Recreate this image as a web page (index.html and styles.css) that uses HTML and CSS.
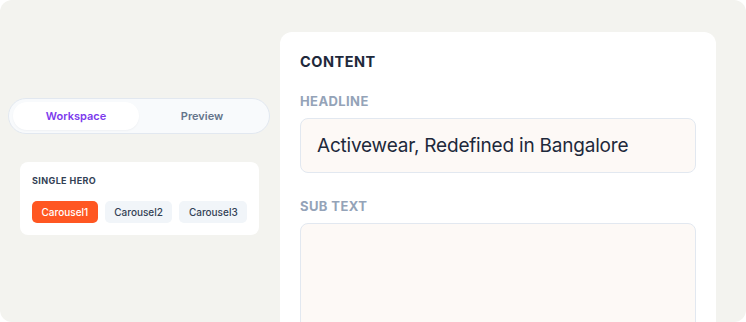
FILE: index.html
```html
<!DOCTYPE html>
<html>
<head>
<meta charset="utf-8">
<link rel="stylesheet" href="styles.css">
</head>
<body>
<div class="frame">
  <div class="side">
    <div class="toggle">
      <div class="tab active">Workspace</div>
      <div class="tab">Preview</div>
    </div>
    <div class="card">
      <div class="card-title">SINGLE HERO</div>
      <div class="chips">
        <span class="chip on">Carousel1</span>
        <span class="chip">Carousel2</span>
        <span class="chip">Carousel3</span>
      </div>
    </div>
  </div>
  <div class="panel">
    <div class="panel-title">CONTENT</div>
    <div class="label">HEADLINE</div>
    <div class="input">Activewear, Redefined in Bangalore</div>
    <div class="label sub">SUB TEXT</div>
    <div class="textarea"></div>
  </div>
</div>
</body>
</html>
```
FILE: styles.css
```css
html, body { margin: 0; padding: 0; background: #ffffff; }
body { font-family: Inter, "Noto Sans", sans-serif; width: 746px; height: 322px; overflow: hidden; }
.frame {
  width: 746px; height: 322px; box-sizing: border-box;
  background: #f3f3ef; border-radius: 12px; overflow: hidden;
  display: flex; gap: 10px; padding-left: 8px;
}
.side { width: 262px; padding-top: 98px; display: flex; flex-direction: column; gap: 28px; }
.toggle {
  height: 36px; box-sizing: border-box; border: 1px solid #e2e8f0; background: #f8fafc;
  border-radius: 18px; padding: 3px 4px; display: flex;
}
.tab { flex: 1; display: flex; align-items: center; justify-content: center; font-size: 11px; font-weight: 600; color: #64748b; border-radius: 14px; }
.tab.active { background: #ffffff; color: #7c3aed; box-shadow: 0 1px 2px rgba(15,23,42,0.04); }
.card { margin: 0 11px 0 12px; background: #fff; border-radius: 8px; padding: 14px 12px 12px; height: 73px; box-sizing: border-box; }
.card-title { font-size: 9px; font-weight: 700; color: #334155; letter-spacing: 0.4px; line-height: 10px; }
.chips { display: flex; gap: 7px; margin-top: 15px; }
.chip { height: 22px; padding: 0 9.5px; border-radius: 5px; background: #f1f5f9; color: #334155; font-size: 10px; font-weight: 500; display: flex; align-items: center; }
.chip.on { background: #ff5722; color: #fff; }
.panel { width: 436px; margin-top: 32px; background: #fff; border-radius: 12px 12px 0 0; padding: 20px 20px 0; box-sizing: border-box; }
.panel-title { font-size: 14.5px; font-weight: 700; color: #1e293b; letter-spacing: 0.5px; line-height: 20px; }
.label { font-size: 13px; font-weight: 700; color: #94a3b8; letter-spacing: 0.4px; line-height: 18px; margin-top: 20px; }
.label.sub { margin-top: 24px; }
.input { margin-top: 8px; height: 55px; box-sizing: border-box; border: 1px solid #e2e8f0; border-radius: 8px; background: #fdf9f6; padding: 0 16px; display: flex; align-items: center; font-size: 19px; color: #1e293b; letter-spacing: -0.2px; }
.textarea { margin-top: 8px; height: 120px; border: 1px solid #e2e8f0; border-radius: 8px; background: #fdf9f6; }
```
